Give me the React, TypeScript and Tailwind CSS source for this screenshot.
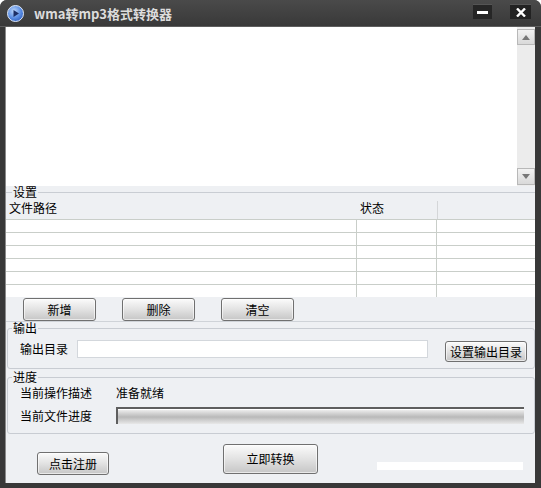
import React from "react";

const btn =
  "flex items-center justify-center border border-[#707070] rounded-[3px] bg-linear-to-b from-[#fbfbfb] via-[#e2e2e2] to-[#c6c6c6] text-[12px] leading-[14px] text-black shadow-[inset_0_0_0_1px_rgba(255,255,255,0.6)]";

function Icon() {
  return (
    <svg width="17" height="17" viewBox="0 0 17 17">
      <defs>
        <radialGradient id="g" cx="40%" cy="35%" r="70%">
          <stop offset="0%" stopColor="#bcd6fb" />
          <stop offset="60%" stopColor="#5c8fe4" />
          <stop offset="100%" stopColor="#2f5fc0" />
        </radialGradient>
      </defs>
      <circle cx="8.5" cy="8.5" r="8" fill="url(#g)" stroke="#dfe8f7" strokeWidth="1" />
      <path d="M6.5 5 L12 8.5 L6.5 12 Z" fill="#1d2f66" />
    </svg>
  );
}

function Row({ last }: { last?: boolean }) {
  return (
    <div className={`flex bg-white ${last ? "h-[12px]" : "h-[13px] border-b border-[#c9cec9]"}`}>
      <div className="w-[351px] border-r border-[#c9cec9]" />
      <div className="w-[80px] border-r border-[#c9cec9]" />
      <div className="flex-1" />
    </div>
  );
}

export default function App() {
  return (
    <div className="w-[541px] h-[488px] bg-[#383838] rounded-t-[7px] flex flex-col font-['Noto_Sans_CJK_SC',sans-serif] text-[12px] text-black overflow-hidden">
      {/* title bar */}
      <div className="h-[27px] flex items-start bg-linear-to-b from-[#4a4a4a] to-[#393939] border-b border-[#5e5e5e]">
        <div className="ml-[7px] mt-[5px]">
          <Icon />
        </div>
        <div className="ml-[10px] mt-[6px] text-[13px] leading-[15px] font-bold text-[#dcdcdc]">
          wma转mp3格式转换器
        </div>
        <div className="ml-auto mt-[4px] w-[19px] h-[15px] bg-[#262626] border-t border-[#555] flex items-center justify-center">
          <div className="w-[11px] h-[3px] bg-white" />
        </div>
        <div className="ml-[18px] mr-[10px] mt-[4px] w-[21px] h-[15px] bg-[#222] border-t border-[#555] flex items-center justify-center">
          <svg width="10" height="9" viewBox="0 0 10 9">
            <path d="M1 0.5 L9 8.5 M9 0.5 L1 8.5" stroke="#fff" strokeWidth="2.4" />
          </svg>
        </div>
      </div>

      {/* body */}
      <div className="flex-1 ml-[5px] mr-[6px] mb-[5px] bg-[#eef0f3] flex flex-col border-l border-[#8a8a8a]">
        {/* text area */}
        <div className="h-[159px] flex bg-white">
          <div className="flex-1 bg-white" />
          <div className="w-[18px] flex flex-col pt-[2px] pb-[1px] bg-[#ededed]">
            <div className="h-[16px] border border-[#b8b8b8] bg-linear-to-b from-[#f2f2f2] to-[#d9d9d9] flex items-center justify-center">
              <svg width="8" height="5" viewBox="0 0 8 5">
                <path d="M0 5 L4 0 L8 5 Z" fill="#777" />
              </svg>
            </div>
            <div className="flex-1 bg-[#ececec]" />
            <div className="h-[17px] border border-[#b8b8b8] bg-linear-to-b from-[#f2f2f2] to-[#d9d9d9] flex items-center justify-center">
              <svg width="8" height="5" viewBox="0 0 8 5">
                <path d="M0 0 L8 0 L4 5 Z" fill="#777" />
              </svg>
            </div>
          </div>
        </div>

        {/* settings legend */}
        <div className="h-[11px] flex items-start">
          <div className="w-[6px] h-px mt-[6px] bg-[#c9cdd3]" />
          <div className="px-[1px] leading-[13px] -mt-[1px]">设置</div>
          <div className="flex-1 h-px mt-[6px] bg-[#c9cdd3]" />
        </div>

        {/* list */}
        <div className="flex h-[23px] border-b border-[#c9cec9] items-center">
          <div className="w-[351px] pl-[3px] leading-[14px]">文件路径</div>
          <div className="w-[80px] pl-[3px] leading-[14px]">状态</div>
          <div className="flex-1 self-stretch border-l border-[#d4d6d8] mt-[4px]" />
        </div>
        <Row />
        <Row />
        <Row />
        <Row />
        <Row />
        <Row last />

        {/* buttons */}
        <div className="h-[25px] flex items-start pt-[1px] pl-[17px] gap-[26px] border-b border-[#cfd3d8]">
          <div className={`${btn} w-[73px] h-[23px]`}>新增</div>
          <div className={`${btn} w-[73px] h-[23px]`}>删除</div>
          <div className={`${btn} w-[73px] h-[23px]`}>清空</div>
        </div>

        {/* output group */}
        <fieldset className="ml-[1px] h-[47px] border border-[#c8ccd2] rounded-[3px] px-[4px]">
          <legend className="px-[1px] leading-[12px]">输出</legend>
          <div className="flex items-start pt-[6px]">
            <div className="ml-[8px] mt-[2px] leading-[14px]">输出目录</div>
            <div className="ml-[9px] w-[351px] h-[18px] bg-white border border-[#d3d7dc]" />
            <div className={`${btn} ml-[17px] mt-[1px] w-[82px] h-[21px]`}>设置输出目录</div>
          </div>
        </fieldset>

        {/* progress group */}
        <fieldset className="ml-[1px] mt-[2px] h-[63px] border border-[#c8ccd2] rounded-[3px] px-[4px]">
          <legend className="px-[1px] leading-[12px]">进度</legend>
          <div className="flex mt-[3px] h-[14px] items-center leading-[14px]">
            <div className="ml-[8px] w-[96px]">当前操作描述</div>
            <div>准备就绪</div>
          </div>
          <div className="flex mt-[7px] h-[17px] items-center leading-[14px]">
            <div className="ml-[8px] w-[96px]">当前文件进度</div>
            <div className="w-[408px] h-[17px] border-t-2 border-l-2 border-[#5e5e5e]">
              <div className="h-full border-t border-white bg-linear-to-b from-[#ececec] via-[#b9b9b9] to-[#e8e8e8]" />
            </div>
          </div>
        </fieldset>

        {/* bottom */}
        <div className="flex-1 flex items-start">
          <div className={`${btn} ml-[31px] mt-[18px] w-[72px] h-[23px]`}>点击注册</div>
          <div className={`${btn} ml-[114px] mt-[10px] w-[95px] h-[30px]`}>立即转换</div>
          <div className="ml-[59px] mt-[28px] w-[146px] h-[8px] bg-white" />
        </div>
      </div>
    </div>
  );
}
